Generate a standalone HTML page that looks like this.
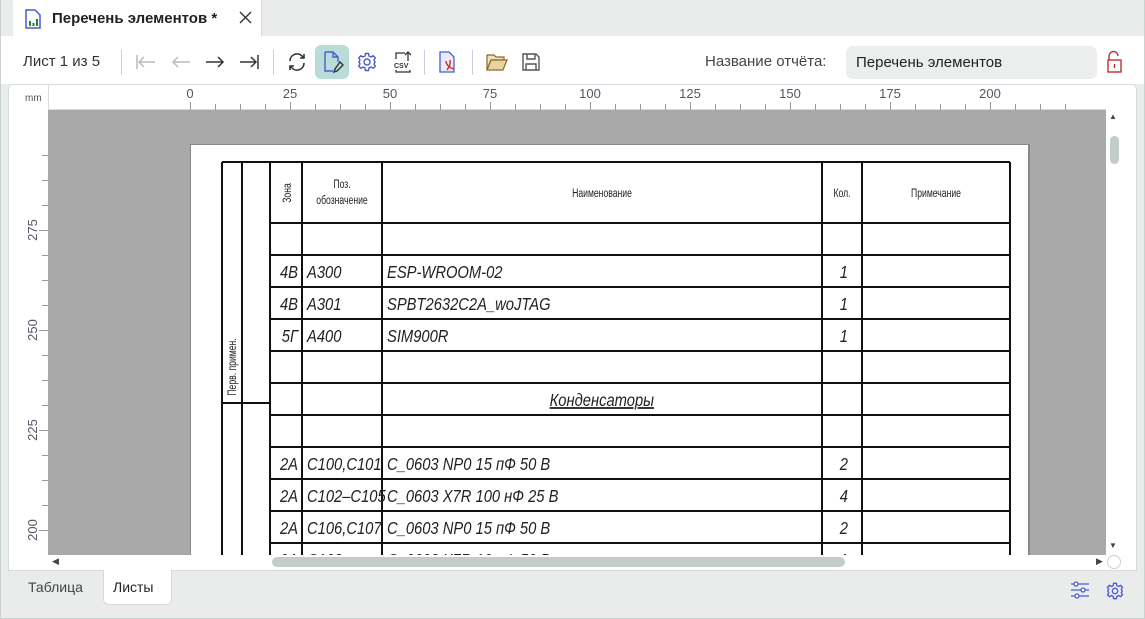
<!DOCTYPE html>
<html><head><meta charset="utf-8"><style>
*{margin:0;padding:0;box-sizing:border-box}
body{width:1145px;height:619px;overflow:hidden;background:#eaeceb;font-family:"Liberation Sans",sans-serif;position:relative;color:#222}
.a{position:absolute}
</style></head><body>
<div class="a" style="left:0;top:0;width:1145px;height:619px;border:1px solid #c9d2d1;border-top:none"></div>
<div class="a" style="left:13px;top:0;width:249px;height:36px;background:#fff;border-right:1px solid #d0d6d5"></div>
<svg class="a" style="left:24px;top:9px" width="18" height="20" viewBox="0 0 18 20"><path d="M2 1h9l5 5v13H2z" fill="#fff" stroke="#4a5bd0" stroke-width="1.5"/><rect x="5" y="12" width="2" height="5" fill="#1a8a2a"/><rect x="8.5" y="14" width="2" height="3" fill="#1a8a2a"/><rect x="12" y="10" width="2" height="7" fill="#1a8a2a"/></svg>
<div class="a" style="left:52px;top:10px;font-size:15px;font-weight:bold;color:#222">Перечень элементов *</div>
<svg class="a" style="left:239px;top:11px" width="13" height="13"><path d="M1 1L12 12M12 1L1 12" stroke="#333" stroke-width="1.4"/></svg>
<div class="a" style="left:0;top:36px;width:1145px;height:48px;background:#fff;border-left:1px solid #c9d2d1;border-right:1px solid #c9d2d1"></div>
<div class="a" style="left:23px;top:53px;font-size:15px;color:#333">Лист 1 из 5</div>
<div class="a" style="left:121px;top:50px;width:1px;height:25px;background:#ccd"></div>
<div class="a" style="left:273px;top:50px;width:1px;height:25px;background:#ccd"></div>
<div class="a" style="left:424px;top:50px;width:1px;height:25px;background:#ccd"></div>
<div class="a" style="left:472px;top:50px;width:1px;height:25px;background:#ccd"></div>
<svg class="a" style="left:134px;top:52px" width="130" height="20"><g fill="none" stroke-width="1.5"><g stroke="#b8bcc4"><path d="M3 3v14M5 10h16M10 5l-5 5 5 5"/><path d="M39 10h17M44 5l-5 5 5 5"/></g><g stroke="#333"><path d="M72 10h17M84 5l5 5-5 5"/><path d="M106 10h16M117 5l5 5-5 5M124 3v14"/></g></g></svg>
<svg class="a" style="left:286px;top:51px" width="22" height="22" viewBox="0 0 22 22" fill="none" stroke="#333" stroke-width="1.6"><path d="M4 10a7 7 0 0 1 12-5l2 2M18 3v4h-4M18 12a7 7 0 0 1-12 5l-2-2M4 19v-4h4"/></svg>
<div class="a" style="left:315px;top:45px;width:34px;height:34px;background:#b9dcd8;border-radius:6px"></div>
<svg class="a" style="left:322px;top:50px" width="22" height="24" viewBox="0 0 22 24" fill="none" stroke="#4a5bd0" stroke-width="1.4"><path d="M3 2h8l5 5v5M3 2v19h8M11 2v5h5"/><path d="M18 12l3 3-6 6-3 1 1-3z" stroke="#333"/></svg>
<svg class="a" style="left:357px;top:52px" width="20" height="20" viewBox="0 0 20 20" fill="none" stroke="#4a5bd0" stroke-width="1.4"><circle cx="10" cy="10" r="3"/><path d="M8.5 1.5h3l.5 2.5 2 1 2.2-1.3 2.1 2.1L17 8l1 2-1 2 1.3 2.2-2.1 2.1L14 15l-2 1-.5 2.5h-3L8 16l-2-1-2.2 1.3-2.1-2.1L3 12l-1-2 1-2-1.3-2.2 2.1-2.1L6 5l2-1z"/></svg>
<svg class="a" style="left:393px;top:50px" width="20" height="24" viewBox="0 0 20 24" fill="none" stroke="#333" stroke-width="1.3"><path d="M3 9V3h9M3 20v2h14v-2"/><path d="M15 11V2M12 5l3-3 3 3"/><text x="1" y="18" font-size="7" font-family="Liberation Sans" stroke="none" fill="#333" font-weight="bold">CSV</text></svg>
<svg class="a" style="left:438px;top:50px" width="20" height="24" viewBox="0 0 20 24"><path d="M2 2h9l5 5v15H2z" fill="#e8ecfa" stroke="#4a5bd0" stroke-width="1.3"/><path d="M8 11c0 4 4 7 8 8M9 20c2-3 4-6 3-10" fill="none" stroke="#d03030" stroke-width="1.5"/></svg>
<svg class="a" style="left:486px;top:52px" width="22" height="20" viewBox="0 0 22 20"><path d="M1 3h7l2 2h8v3H5L1 18z" fill="#f0e2bf" stroke="#8a6a2a" stroke-width="1.2"/><path d="M1 18l4-10h16l-4 10z" fill="#e8d3a0" stroke="#8a6a2a" stroke-width="1.2"/></svg>
<svg class="a" style="left:521px;top:52px" width="20" height="20" viewBox="0 0 20 20" fill="none" stroke="#555" stroke-width="1.4"><path d="M2 2h13l3 3v13H2z"/><path d="M6 2v5h8V2M5 18v-6h10v6"/></svg>
<div class="a" style="left:705px;top:53px;font-size:15px;color:#444">Название отчёта:</div>
<div class="a" style="left:846px;top:46px;width:251px;height:33px;background:#eceeee;border-radius:7px;font-size:15px;color:#222;padding:8px 10px">Перечень элементов</div>
<svg class="a" style="left:1106px;top:50px" width="17" height="24" viewBox="0 0 17 24" fill="none" stroke="#c03030" stroke-width="1.4"><path d="M3 10V6a4.5 4.5 0 0 1 9 0"/><rect x="2" y="10" width="13" height="12"/><path d="M8.5 14v4"/></svg>
<div class="a" style="left:8px;top:84px;width:1129px;height:487px;background:#fff;border:1px solid #d6dcdc;border-radius:5px 5px 0 0"></div>
<div class="a" style="left:25px;top:93px;font-size:10px;color:#555">mm</div>
<div class="a" style="left:48px;top:85px;width:1px;height:25px;background:#d6dcdc"></div>
<div class="a" style="left:48px;top:110px;width:1058px;height:445px;background:#a9a9a9"></div>
<svg class="a" style="left:48px;top:85px" width="1058" height="25" id="tr"></svg>
<svg class="a" style="left:9px;top:110px" width="39" height="445" id="lr"></svg>
<div class="a" style="left:190px;top:144px;width:840px;height:411px;background:#fff;border-right:2px solid #888;border-left:1px solid #888;border-top:1px solid #888"></div>
<svg class="a" style="left:190px;top:144px" width="840" height="411" id="pg"></svg>
<div class="a" style="left:1106px;top:110px;width:16px;height:445px;background:#fff"></div>
<div class="a" style="left:1110px;top:136px;width:9px;height:28px;background:#c3cccb;border-radius:5px"></div>
<div class="a" style="left:1109px;top:112px;font-size:8px;color:#444">▲</div>
<div class="a" style="left:1109px;top:541px;font-size:8px;color:#444">▼</div>
<div class="a" style="left:48px;top:555px;width:1074px;height:15px;background:#fff"></div>
<div class="a" style="left:272px;top:557px;width:573px;height:10px;background:#c3cccb;border-radius:5px"></div>
<div class="a" style="left:52px;top:556px;font-size:9px;color:#444">◀</div>
<div class="a" style="left:1096px;top:556px;font-size:9px;color:#444">▶</div>
<div class="a" style="left:1107px;top:555px;width:14px;height:14px;border:1px solid #ccd;border-radius:50%"></div>
<div class="a" style="left:28px;top:579px;font-size:14px;color:#444">Таблица</div>
<div class="a" style="left:103px;top:570px;width:69px;height:35px;background:#fff;border:1px solid #d6dcdc;border-top:none;border-radius:0 0 6px 6px"></div>
<div class="a" style="left:113px;top:579px;font-size:14px;color:#222">Листы</div>
<svg class="a" style="left:1070px;top:580px" width="20" height="20" viewBox="0 0 20 20" fill="none" stroke="#4a5bd0" stroke-width="1.3"><path d="M1 4h18M1 10h18M1 16h18"/><circle cx="6" cy="4" r="2" fill="#fff"/><circle cx="13" cy="10" r="2" fill="#fff"/><circle cx="7" cy="16" r="2" fill="#fff"/></svg>
<svg class="a" style="left:1106px;top:582px" width="18" height="18" viewBox="0 0 20 20" fill="none" stroke="#4a5bd0" stroke-width="1.5"><circle cx="10" cy="10" r="3"/><path d="M8.5 1.5h3l.5 2.5 2 1 2.2-1.3 2.1 2.1L17 8l1 2-1 2 1.3 2.2-2.1 2.1L14 15l-2 1-.5 2.5h-3L8 16l-2-1-2.2 1.3-2.1-2.1L3 12l-1-2 1-2-1.3-2.2 2.1-2.1L6 5l2-1z"/></svg>
<script>
var NS="http://www.w3.org/2000/svg";
function el(p,n,a,txt){var e=document.createElementNS(NS,n);for(var k in a)e.setAttribute(k,a[k]);if(txt)e.textContent=txt;p.appendChild(e);return e}
var tr=document.getElementById('tr');
el(tr,'line',{x1:0,y1:24.5,x2:1058,y2:24.5,stroke:'#d6dcdc'});
for(var i=0;i<36;i++){var x=142+i*25;var maj=i%4==0;el(tr,'line',{x1:x+.5,y1:maj?17:19,x2:x+.5,y2:25,stroke:'#999'});
if(maj)el(tr,'text',{x:x,y:13,'text-anchor':'middle','font-size':13,fill:'#556','font-family':'Liberation Sans'},String(i/4*25));}
var lr=document.getElementById('lr');
for(var i=-3;i<20;i++){var y=120+i*25;if(y<0||y>445)continue;var maj=((i%4)+4)%4==0;el(lr,'line',{x1:maj?30:33,y1:y+.5,x2:39,y2:y+.5,stroke:'#999'});
if(maj){var v=275-i/4*25;el(lr,'text',{x:0,y:0,transform:'translate(28,'+y+') rotate(-90)','text-anchor':'middle','font-size':13,fill:'#556','font-family':'Liberation Sans'},String(v));}}
var pg=document.getElementById('pg');
var cols=[222,242,270,302,382,822,862,1010];
var rows=[162,223,255,287,319,351,383,415,447,479,511,543,575];
function L(x1,y1,x2,y2,w){el(pg,'line',{x1:x1-190,y1:y1-144,x2:x2-190,y2:y2-144,stroke:'#111','stroke-width':w||2})}
L(222,162,1010,162);
rows.forEach(function(y){L(270,y,1010,y)});
L(222,162,222,600);L(242,162,242,600);
for(var c=2;c<cols.length;c++)L(cols[c],162,cols[c],600);
L(222,403,270,403);
var FF='Liberation Sans, sans-serif';
function T(x,y,s,anchor,extra){var a={x:0,y:0,transform:'translate('+(x-190)+','+(y-144)+') scale(0.82,1)','font-family':FF,'font-size':18,'font-style':'italic',fill:'#222'};if(anchor)a['text-anchor']=anchor;for(var k in extra)a[k]=extra[k];el(pg,'text',a,s)}
function S(x,y,s,rot){var a={x:0,y:0,transform:'translate('+(x-190)+','+(y-144)+')'+(rot?' rotate(-90)':'')+' scale(0.72,1)','font-family':FF,'font-size':12,fill:'#222','text-anchor':'middle'};el(pg,'text',a,s)}
S(291,193,'Зона',1);
S(342,188,'Поз.');S(342,204,'обозначение');
S(602,197,'Наименование');S(842,197,'Кол.');S(936,197,'Примечание');
S(236,367,'Перв. примен.',1);
var data=[[255,'4В','А300','ESP-WROOM-02','1'],[287,'4В','А301','SPBT2632C2A_woJTAG','1'],[319,'5Г','А400','SIM900R','1'],
[447,'2А','С100,С101','C_0603 NP0 15 пФ 50 В','2'],[479,'2А','С102–С105','C_0603 X7R 100 нФ 25 В','4'],[511,'2А','С106,С107','C_0603 NP0 15 пФ 50 В','2'],[543,'2А','С108','C_0603 X7R 10 нФ 50 В','1']];
data.forEach(function(r){var y=r[0]+23;T(298,y,r[1],'end');T(307,y,r[2]);T(387,y,r[3]);T(848,y,r[4],'end');});
T(654,406,'Конденсаторы','end',{'text-decoration':'underline'});
</script>
</body></html>
